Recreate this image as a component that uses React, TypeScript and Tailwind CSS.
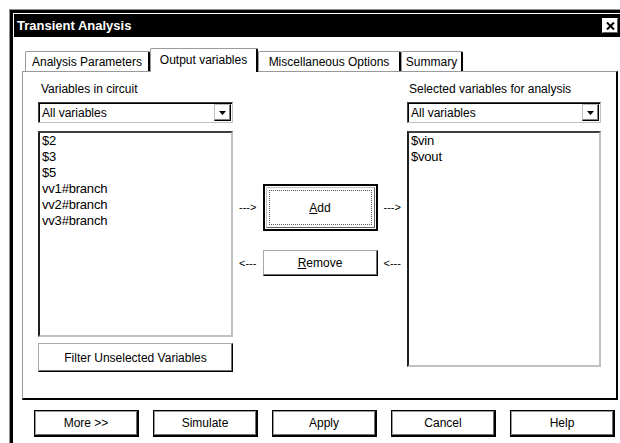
import React from 'react';

const tabs = [
  { label: 'Analysis Parameters', w: 'w-[125px]' },
  { label: 'Output variables', w: 'w-[108px]', active: true },
  { label: 'Miscellaneous Options', w: 'w-[143px]' },
  { label: 'Summary', w: 'w-[62px]' },
];

const circuitVars = ['$2', '$3', '$5', 'vv1#branch', 'vv2#branch', 'vv3#branch'];
const selectedVars = ['$vin', '$vout'];

// plain 3D push button
const btn =
  'flex items-center justify-center bg-white border border-t-[#a8a8a8] border-l-[#a8a8a8] border-r-black border-b-black shadow-[inset_-1px_-1px_0_#707070] text-[12px] text-black';

// dialog footer buttons have a black frame around the bevel
const footBtn =
  'flex items-center justify-center w-[105px] h-[27px] bg-white border border-black border-r-2 border-b-2 shadow-[inset_1px_1px_0_#9a9a9a,inset_-1px_-1px_0_#707070] text-[12px] text-black';

function Dropdown({ value }: { value: string }) {
  return (
    <div className="flex items-center h-[21px] bg-white border border-t-[#404040] border-l-[#404040] border-r-[#c0c0c0] border-b-[#c0c0c0] shadow-[inset_1px_1px_0_#000]">
      <span className="flex-1 pl-[3px] text-[12px] leading-none">{value}</span>
      <span className="flex items-center justify-center w-[17px] h-[17px] mr-px border border-t-[#c0c0c0] border-l-[#c0c0c0] border-r-black border-b-black shadow-[inset_-1px_-1px_0_#808080]">
        <svg width="8" height="4" viewBox="0 0 8 4">
          <path d="M0 0 H7 L3.5 4 Z" fill="#000" />
        </svg>
      </span>
    </div>
  );
}

function ListBox({ items, h }: { items: string[]; h: string }) {
  return (
    <div
      className={`${h} bg-white border-2 border-t-[#404040] border-l-[#202020] border-r-[#c0c0c0] border-b-[#c0c0c0] pl-[2px]`}
    >
      {items.map((v) => (
        <div key={v} className="text-[13px] leading-[16px] tracking-[-0.2px]">
          {v}
        </div>
      ))}
    </div>
  );
}

function Arrow({ text }: { text: string }) {
  return <span className="flex-1 text-center text-[11px] text-black">{text}</span>;
}

export default function App() {
  return (
    <div className="w-[620px] h-[443px] bg-white overflow-hidden pt-[9px] pl-[9px] font-['Liberation_Sans',Arial,sans-serif] text-black">
      <div className="w-[640px] h-[460px] border-t border-l border-[#909090]">
        <div className="h-full border-t-[3px] border-l-[3px] border-black pt-px pl-px bg-white">
          {/* title bar */}
          <div className="w-[606px] h-[23px] bg-black flex items-center justify-between pl-[3px]">
            <span className="text-white font-bold text-[13px] leading-none">Transient Analysis</span>
            <span className="flex items-center justify-center w-[16px] h-[15px] mr-[2px] bg-white border border-t-white border-l-white border-r-[#606060] border-b-[#606060]">
              <svg width="9" height="8" viewBox="0 0 9 8">
                <path d="M1 0.5 L8 7.5 M8 0.5 L1 7.5" stroke="#000" strokeWidth="2" />
              </svg>
            </span>
          </div>

          <div className="pl-[8px] pt-[11px] w-[606px]">
            {/* tabs */}
            <div className="flex items-end h-[24px] pl-[3px] relative z-10 -mb-px">
              {tabs.map((t) =>
                t.active ? (
                  <div
                    key={t.label}
                    className={`${t.w} h-[24px] bg-white flex items-center justify-center text-[12px] pb-[2px] border-t border-l border-[#9a9a9a] border-r-2 border-r-black rounded-t-[2px]`}
                  >
                    {t.label}
                  </div>
                ) : (
                  <div
                    key={t.label}
                    className={`${t.w} h-[20px] mb-px bg-white flex items-center justify-center text-[12px] border-t border-l border-[#9a9a9a] border-r-2 border-r-black rounded-t-[2px]`}
                  >
                    {t.label}
                  </div>
                ),
              )}
            </div>

            {/* tab panel */}
            <div className="w-[596px] h-[329px] border-t border-l border-[#9a9a9a] border-r-2 border-b-2 border-r-black border-b-black flex pl-[15px] pt-[10px]">
              <div className="w-[195px] flex flex-col">
                <div className="h-[14px] text-[12px] leading-[14px] pl-[3px]">Variables in circuit</div>
                <div className="mt-[6px]">
                  <Dropdown value="All variables" />
                </div>
                <div className="mt-[8px]">
                  <ListBox items={circuitVars} h="h-[206px]" />
                </div>
                <div className={`${btn} mt-[6px] h-[29px]`}>Filter Unselected Variables</div>
              </div>

              <div className="w-[174px] flex flex-col pt-[102px]">
                <div className="flex items-center h-[47px]">
                  <Arrow text="--->" />
                  <div className="w-[115px] h-[47px] bg-white border-2 border-black p-px">
                    <div className="h-full border border-t-[#c0c0c0] border-l-[#c0c0c0] border-r-[#606060] border-b-[#606060] p-[2px]">
                      <div className="h-full border border-dotted border-[#555] flex items-center justify-center text-[12px]">
                        <span>
                          <span className="underline">A</span>dd
                        </span>
                      </div>
                    </div>
                  </div>
                  <Arrow text="--->" />
                </div>
                <div className="flex items-center h-[26px] mt-[19px]">
                  <Arrow text="<---" />
                  <div className={`${btn} w-[115px] h-[26px]`}>
                    <span>
                      <span className="underline">R</span>emove
                    </span>
                  </div>
                  <Arrow text="<---" />
                </div>
              </div>

              <div className="w-[194px] flex flex-col">
                <div className="h-[14px] text-[12px] leading-[14px] pl-[2px]">Selected variables for analysis</div>
                <div className="mt-[6px]">
                  <Dropdown value="All variables" />
                </div>
                <div className="mt-[8px]">
                  <ListBox items={selectedVars} h="h-[236px]" />
                </div>
              </div>
            </div>

            {/* footer buttons */}
            <div className="flex gap-[14px] pl-[12px] mt-[10px]">
              <div className={footBtn}>More &gt;&gt;</div>
              <div className={footBtn}>Simulate</div>
              <div className={footBtn}>Apply</div>
              <div className={footBtn}>Cancel</div>
              <div className={footBtn}>Help</div>
            </div>
          </div>
        </div>
      </div>
    </div>
  );
}
